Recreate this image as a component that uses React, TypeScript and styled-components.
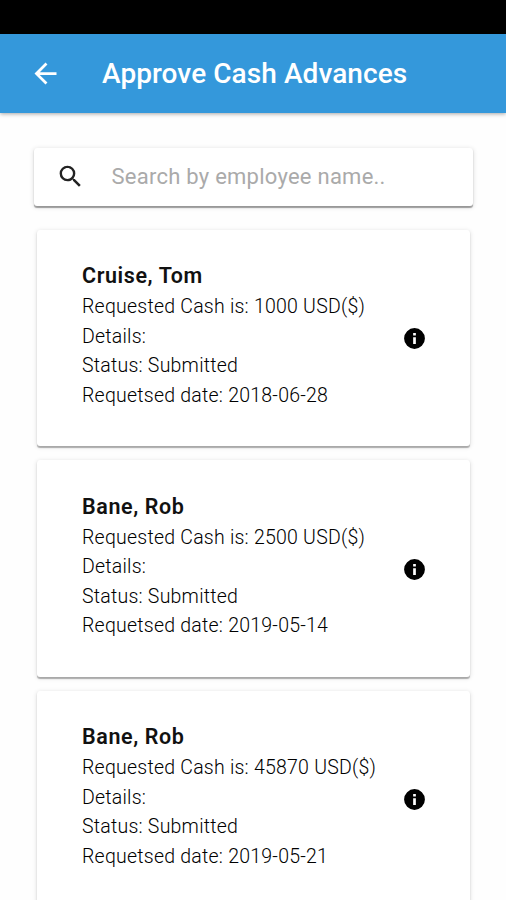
import React from "react";
import styled, { createGlobalStyle } from "styled-components";

const GlobalStyle = createGlobalStyle`
  * { box-sizing: border-box; }
  html, body { margin: 0; background: #fff; overflow: hidden; }
  body { font-family: Roboto, "Liberation Sans", sans-serif; }
`;

const Screen = styled.div`
  width: 506px;
  height: 900px;
  overflow: hidden;
  display: flex;
  flex-direction: column;
  background: #fefefe;
`;

const StatusBar = styled.div`
  height: 34px;
  flex: none;
  background: #000;
`;

const AppBar = styled.header`
  height: 79px;
  flex: none;
  display: flex;
  align-items: center;
  padding-left: 29px;
  background: #3498db;
  color: #fff;
  box-shadow: 0 1px 4px rgba(0, 0, 0, 0.35);
`;

const Title = styled.h1`
  margin: 0 0 0 40px;
  font-size: 28px;
  font-weight: 500;
  line-height: 34px;
  letter-spacing: 0.07px;
  white-space: nowrap;
`;

const Icon = styled.svg<{ $size: number }>`
  width: ${(p) => p.$size}px;
  height: ${(p) => p.$size}px;
  flex: none;
  fill: currentColor;
`;

const InfoIcon = styled(Icon)`
  margin-top: 6px;
  color: #000;
`;

const SearchBox = styled.label`
  height: 58px;
  flex: none;
  display: flex;
  align-items: center;
  margin: 35px 33px 0 34px;
  padding: 0 0 2px 22px;
  gap: 26.5px;
  border-radius: 3px;
  background: #fff;
  color: #222;
  box-shadow: 0 1.5px 1px rgba(0, 0, 0, 0.34), 0 1px 5px rgba(0, 0, 0, 0.16);
`;

const SearchInput = styled.input`
  flex: 1;
  min-width: 0;
  border: 0;
  padding: 0;
  outline: 0;
  background: transparent;
  font: 400 22px Roboto, sans-serif;
  letter-spacing: 0.25px;
  &::placeholder { color: #aaa; opacity: 1; }
`;

const List = styled.main`
  display: flex;
  flex-direction: column;
  gap: 14.2px;
  padding: 24px 36px 0 37px;
`;

const Card = styled.article`
  height: 216.3px;
  flex: none;
  display: flex;
  align-items: center;
  justify-content: space-between;
  padding: 0 43px 5px 45px;
  border-radius: 3px;
  background: #fff;
  box-shadow: 0 1.5px 1px rgba(0, 0, 0, 0.28), 0 1px 5px rgba(0, 0, 0, 0.14);
`;

const Details = styled.div`
  color: #000;
  font-size: 19.5px;
  font-weight: 300;
  line-height: 29.5px;
  letter-spacing: 0.23px;
  white-space: nowrap;
`;

const Name = styled.h2`
  margin: 0;
  color: #111;
  font-size: 21.5px;
  font-weight: 600;
  line-height: 30px;
  padding-bottom: 1px;
  letter-spacing: 0.6px;
`;

const requests = [
  { name: "Cruise, Tom", cash: 1000, date: "2018-06-28" },
  { name: "Bane, Rob", cash: 2500, date: "2019-05-14" },
  { name: "Bane, Rob", cash: 45870, date: "2019-05-21" },
];

export default function App() {
  return (
    <Screen>
      <GlobalStyle />
      <StatusBar />
      <AppBar>
        <Icon $size={33} viewBox="0 0 24 24">
          <path d="M20 11H7.83l5.59-5.59L12 4l-8 8 8 8 1.41-1.41L7.83 13H20v-2z" />
        </Icon>
        <Title>Approve Cash Advances</Title>
      </AppBar>
      <SearchBox>
        <Icon $size={29} viewBox="0 0 24 24">
          <path d="M15.5 14h-.79l-.28-.27A6.471 6.471 0 0 0 16 9.5 6.5 6.5 0 1 0 9.5 16c1.61 0 3.09-.59 4.23-1.57l.27.28v.79l5 4.99L20.49 19l-4.99-5zm-6 0C7.01 14 5 11.99 5 9.5S7.01 5 9.5 5 14 7.01 14 9.5 11.99 14 9.5 14z" />
        </Icon>
        <SearchInput placeholder="Search by employee name.." />
      </SearchBox>
      <List>
        {requests.map((r) => (
          <Card key={r.date}>
            <Details>
              <Name>{r.name}</Name>
              <div>Requested Cash is: {r.cash} USD($)</div>
              <div>Details:</div>
              <div>Status: Submitted</div>
              <div>Requetsed date: {r.date}</div>
            </Details>
            <InfoIcon $size={25} viewBox="0 0 24 24">
              <path d="M12 2a10 10 0 1 0 0 20 10 10 0 0 0 0-20zm1.300 15.200h-2.600v-6.400h2.600v6.400zm0-8h-2.600V6.800h2.600v2.400z" />
            </InfoIcon>
          </Card>
        ))}
      </List>
    </Screen>
  );
}
